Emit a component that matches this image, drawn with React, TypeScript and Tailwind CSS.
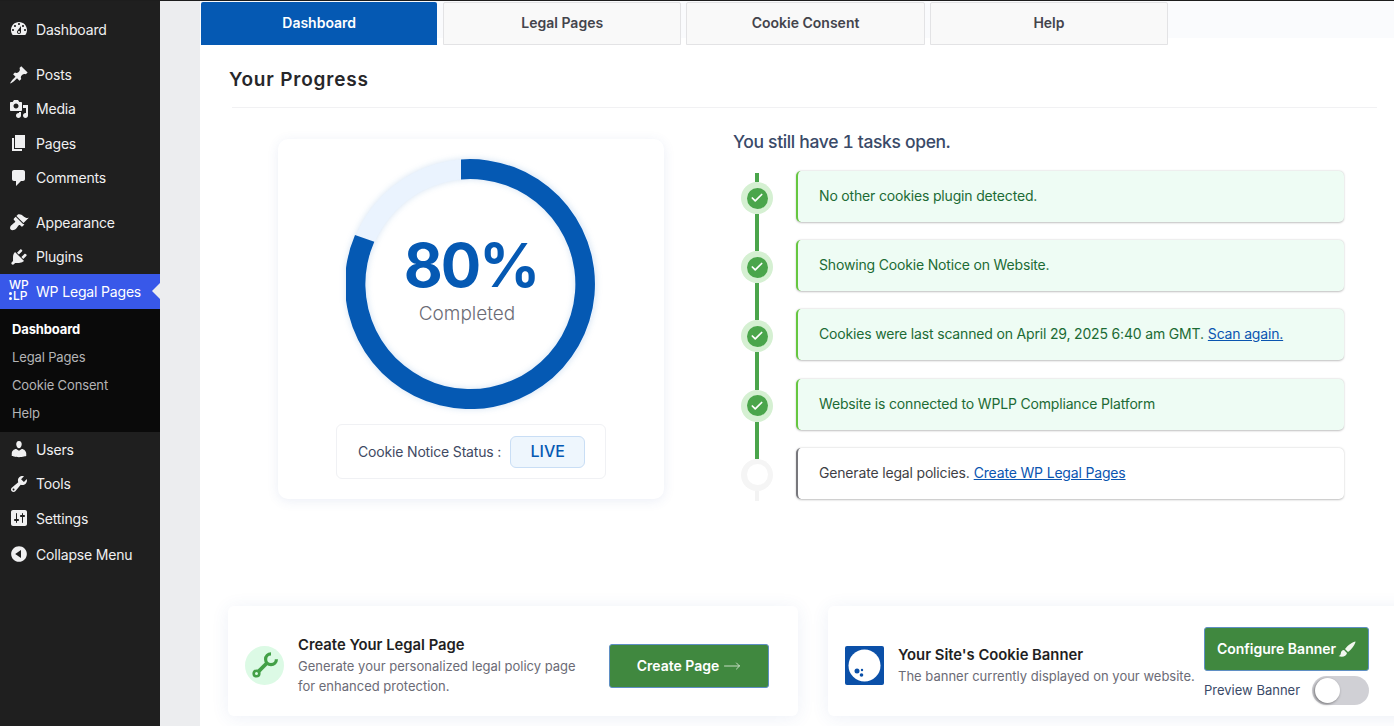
import { Check, MoveRight } from 'lucide-react'

const icons = {
  dashboard: 'M3.76 16h12.48c1.1-1.37 1.76-3.11 1.76-5 0-4.42-3.58-8-8-8s-8 3.58-8 8c0 1.89.66 3.63 1.76 5zM10 4c.55 0 1 .45 1 1s-.45 1-1 1-1-.45-1-1 .45-1 1-1zM6 6c.55 0 1 .45 1 1s-.45 1-1 1-1-.45-1-1 .45-1 1-1zm8 0c.55 0 1 .45 1 1s-.45 1-1 1-1-.45-1-1 .45-1 1-1zm-5.37 5.55L12 7v6c0 1.1-.9 2-2 2s-2-.9-2-2c0-.57.24-1.08.63-1.45zM4 10c.55 0 1 .45 1 1s-.45 1-1 1-1-.45-1-1 .45-1 1-1zm12 0c.55 0 1 .45 1 1s-.45 1-1 1-1-.45-1-1 .45-1 1-1zm-5 3c0-.55-.45-1-1-1s-1 .45-1 1 .45 1 1 1 1-.45 1-1z',
  posts: 'M10.44 3.02l1.82-1.82 6.36 6.35-1.83 1.82c-1.05-.68-2.48-.57-3.41.36l-.75.75c-.92.93-1.04 2.35-.35 3.41l-1.83 1.82-2.41-2.41-2.8 2.79c-.42.42-3.38 2.71-3.8 2.29s1.86-3.39 2.28-3.81l2.79-2.79L4.1 9.36l1.83-1.82c1.05.69 2.48.57 3.4-.36l.75-.75c.93-.92 1.05-2.35.36-3.41z',
  media: 'M13 11V4c0-.55-.45-1-1-1h-1.67L9 1H5L3.67 3H2c-.55 0-1 .45-1 1v7c0 .55.45 1 1 1h10c.55 0 1-.45 1-1zM7 4.5c1.38 0 2.5 1.12 2.5 2.5S8.38 9.5 7 9.5 4.5 8.38 4.5 7 5.62 4.5 7 4.5zM14 6h5v10.5c0 1.38-1.12 2.5-2.5 2.5S14 17.88 14 16.5s1.12-2.5 2.5-2.5c.17 0 .34.02.5.05V9h-3V6zm-4 8.05V13h2v3.5c0 1.38-1.12 2.5-2.5 2.5S7 17.88 7 16.5 8.12 14 9.5 14c.17 0 .34.02.5.05z',
  pages: 'M6 15V2h10v13H6zm-1 1h8v2H3V5h2v11z',
  comments: 'M5 2h9c1.1 0 2 .9 2 2v7c0 1.1-.9 2-2 2h-2l-5 5v-5H5c-1.1 0-2-.9-2-2V4c0-1.1.9-2 2-2z',
  appearance: 'M14.48 11.06L7.41 3.99l1.5-1.5c.5-.56 2.3-.47 3.51.32 1.21.8 1.43 1.28 2.91 2.1 1.18.64 2.45 1.26 4.45.85zm-.71.71L6.7 4.7 4.93 6.47c-.39.39-.39 1.02 0 1.41l1.06 1.06c.39.39.39 1.03 0 1.42-.6.6-1.43 1.11-2.21 1.69-.35.26-.7.53-1.01.84C1.43 13.23.4 16.2 1.71 17.51s4.18.36 5.52-.98c.31-.31.59-.65.84-1.01.58-.78 1.09-1.6 1.69-2.2.39-.39 1.02-.39 1.41 0l1.06 1.05c.39.39 1.02.39 1.41 0l1.77-1.77z',
  plugins: 'M13.11 4.36L9.87 7.6 8 5.73l3.24-3.24c.35-.34 1.05-.2 1.56.32.52.51.66 1.21.31 1.55zm-8 1.77l.91-1.12 9.01 9.01-1.19.84c-.71.71-2.63 1.16-3.82 1.16H6.14L4.9 17.26c-.59.59-1.54.59-2.12 0-.59-.58-.59-1.53 0-2.12l1.24-1.24v-3.88c0-1.13.4-3.19 1.09-3.89zm7.26 3.97l3.24-3.24c.34-.35 1.04-.21 1.55.31.52.51.66 1.21.31 1.55l-3.24 3.25z',
  users: 'M10 9.25c-2.27 0-2.73-3.44-2.73-3.44C7 4.02 7.82 2 9.97 2c2.16 0 2.98 2.02 2.71 3.81 0 0-.41 3.44-2.68 3.44zm0 2.57L12.72 10c2.39 0 4.52 2.33 4.52 4.53v2.49s-3.65 1.13-7.24 1.13c-3.65 0-7.24-1.13-7.24-1.13v-2.49c0-2.25 1.94-4.48 4.47-4.48z',
  tools: 'M16.68 9.77c-1.34 1.34-3.3 1.67-4.95.99l-5.41 6.52c-.99.99-2.59.99-3.58 0s-.99-2.59 0-3.57l6.52-5.42c-.68-1.65-.35-3.61.99-4.95 1.28-1.28 3.12-1.62 4.72-1.06l-2.89 2.89 2.82 2.82 2.86-2.87c.53 1.58.18 3.39-1.08 4.65zM3.81 16.21c.4.39 1.04.39 1.43 0 .4-.4.4-1.04 0-1.43-.39-.4-1.03-.4-1.43 0-.39.39-.39 1.03 0 1.43z',
  settings: 'M18 16V4c0-1.1-.9-2-2-2H4c-1.1 0-2 .9-2 2v12c0 1.1.9 2 2 2h12c1.1 0 2-.9 2-2zM8 11h1c.55 0 1 .45 1 1s-.45 1-1 1H8v1.5c0 .28-.22.5-.5.5s-.5-.22-.5-.5V13H6c-.55 0-1-.45-1-1s.45-1 1-1h1V5.5c0-.28.22-.5.5-.5s.5.22.5.5V11zm5-2h-1c-.55 0-1-.45-1-1s.45-1 1-1h1V5.5c0-.28.22-.5.5-.5s.5.22.5.5V7h1c.55 0 1 .45 1 1s-.45 1-1 1h-1v5.5c0 .28-.22.5-.5.5s-.5-.22-.5-.5V9z',
  collapse: 'M10 2.16c4.33 0 7.84 3.51 7.84 7.84s-3.51 7.84-7.84 7.84S2.16 14.33 2.16 10 5.71 2.16 10 2.16zm2 11.72V6.12L6.18 9.97z',
}

function Dashicon({ d, className }: { d: string; className?: string }) {
  return (
    <svg viewBox="0 0 20 20" fill="currentColor" fillRule="evenodd" className={className}>
      <path d={d} />
    </svg>
  )
}

function MenuItem({ icon, label }: { icon: string; label: string }) {
  return (
    <div className="flex h-[34.4px] items-center text-[14px] tracking-[-0.17px] text-[#f0f0f1]">
      <Dashicon d={icon} className="ml-[9px] h-5 w-5 shrink-0 text-[#f0f0f1]" />
      <span className="ml-[7px]">{label}</span>
    </div>
  )
}

function Sidebar() {
  return (
    <aside className="flex w-[160px] shrink-0 flex-col bg-[#1f1f1f] pt-[11px]">
      <MenuItem icon={icons.dashboard} label="Dashboard" />
      <div className="mt-[11px]">
        <MenuItem icon={icons.posts} label="Posts" />
        <MenuItem icon={icons.media} label="Media" />
        <MenuItem icon={icons.pages} label="Pages" />
        <MenuItem icon={icons.comments} label="Comments" />
      </div>
      <div className="mt-[10.2px]">
        <MenuItem icon={icons.appearance} label="Appearance" />
        <MenuItem icon={icons.plugins} label="Plugins" />
      </div>
      {/* Active plugin row */}
      <div className="relative flex h-[35px] items-center bg-[#3858e9] text-[14px] tracking-[-0.17px] text-white">
        <div className="mb-[2px] ml-[9px] flex w-5 flex-col text-[12px] leading-[11px] font-medium tracking-normal">
          <span>WP</span>
          <span className="flex items-center">
            <span className="mr-px flex flex-col gap-[2px]">
              <span className="h-[3px] w-[3px] rounded-full bg-white" />
              <span className="h-[3px] w-[3px] rounded-full bg-white" />
            </span>
            LP
          </span>
        </div>
        <span className="ml-[7px]">WP Legal Pages</span>
        <div className="absolute top-[9px] right-0 h-0 w-0 border-y-[8px] border-r-[8px] border-y-transparent border-r-[#ecedef]" />
      </div>
      <div className="flex h-[123.2px] flex-col bg-[#0a0a0a] pt-[7px] pl-[12px] text-[13px] tracking-[-0.14px]">
        <div className="flex h-[28px] items-center font-bold text-white">Dashboard</div>
        <div className="flex h-[28px] items-center text-[#b4b4b6]">Legal Pages</div>
        <div className="flex h-[28px] items-center text-[#b4b4b6]">Cookie Consent</div>
        <div className="flex h-[28px] items-center text-[#b4b4b6]">Help</div>
      </div>
      <MenuItem icon={icons.users} label="Users" />
      <MenuItem icon={icons.tools} label="Tools" />
      <MenuItem icon={icons.settings} label="Settings" />
      <div className="mt-[2px]">
        <MenuItem icon={icons.collapse} label="Collapse Menu" />
      </div>
    </aside>
  )
}

function Tabs() {
  const tabs = ['Dashboard', 'Legal Pages', 'Cookie Consent', 'Help']
  return (
    <div className="flex gap-[5px] bg-[linear-gradient(#fafbfd_37px,#ffffff_37px)] pt-px pl-px">
      {tabs.map((t, i) => (
        <div
          key={t}
          className={
            i === 0
              ? 'mr-[0.6px] flex h-[43px] w-[236.4px] items-center justify-center rounded-t-[2px] bg-[#0559b3] pb-[2px] text-[14px] font-semibold text-white'
              : 'flex h-[43px] w-[238.4px] items-center justify-center rounded-t-[2px] border border-[#e3e3e5] bg-[#f9f9f9] pb-[2px] text-[14px] font-semibold text-[#44444c]'
          }
        >
          {t}
        </div>
      ))}
    </div>
  )
}

function ProgressRing() {
  return (
    <div className="relative h-[250px] w-[250px]">
      <svg viewBox="0 0 250 250" className="h-[250px] w-[250px] drop-shadow-[0_0_3px_rgba(11,92,182,0.18)]">
        <circle cx="125" cy="125" r="115" fill="none" stroke="#eaf3fe" strokeWidth="20" />
        <path d="M115 .4 A125 125 0 1 1 9 76 L28.3 82.7 A105 105 0 1 0 115 20.5 Z" fill="#0559b3" />
      </svg>
      <div className="absolute inset-0 flex flex-col items-center pt-[76px]">
        <div className="text-[60px] leading-[60px] font-bold tracking-[-2px] text-[#0559b3]">80%</div>
        <div className="mt-[5px] -ml-2 text-[19px] leading-[28px] font-light text-[#6c6c76]">Completed</div>
      </div>
    </div>
  )
}

type Task = { text: string; link?: string; done: boolean }

const tasks: Task[] = [
  { text: 'No other cookies plugin detected.', done: true },
  { text: 'Showing Cookie Notice on Website.', done: true },
  { text: 'Cookies were last scanned on April 29, 2025 6:40 am GMT.', link: 'Scan again.', done: true },
  { text: 'Website is connected to WPLP Compliance Platform', done: true },
  { text: 'Generate legal policies.', link: 'Create WP Legal Pages', done: false },
]

function TaskRow({ task, index }: { task: Task; index: number }) {
  return (
    <div className="flex h-[69.2px]">
      <div className="flex w-8 shrink-0 flex-col items-center">
        {index === 0 ? (
          <div className="mt-[3px] h-[9px] w-1 bg-[#4aa54b]" />
        ) : (
          <div className="h-[12px] w-1 bg-[#4aa54b]" />
        )}
        {task.done ? (
          <div className="flex h-8 w-8 shrink-0 items-center justify-center rounded-full bg-[#d5f0d2]">
            <div className="flex h-[21px] w-[21px] items-center justify-center rounded-full bg-[#4aa54b]">
              <Check size={14} strokeWidth={3} className="text-white" />
            </div>
          </div>
        ) : (
          <div className="flex h-8 w-8 shrink-0 items-center justify-center rounded-full bg-[#f5f5f5]">
            <div className="h-[21px] w-[21px] rounded-full bg-white" />
          </div>
        )}
        {task.done ? (
          <div className="w-1 flex-1 bg-[#4aa54b]" />
        ) : (
          <div className="h-[10px] w-1 bg-[#f3f3f3]" />
        )}
      </div>
      <div
        className={
          task.done
            ? 'mt-px ml-[23px] flex h-[51px] w-[548px] items-center rounded-[5px] border-l-2 border-[#66c73f] bg-[#eefcf4] pb-[2px] pl-[21px] text-[14px] tracking-[-0.17px] text-[#1c6b35] shadow-[0_0.5px_2px_rgba(0,0,0,0.25)]'
            : 'mt-px ml-[23px] flex h-[51px] w-[548px] items-center rounded-[5px] border-l-2 border-[#77777c] bg-white pb-[2px] pl-[21px] text-[14px] tracking-[-0.17px] text-[#3f3f46] shadow-[0_0.5px_2px_rgba(0,0,0,0.25)]'
        }
      >
        <span>{task.text}</span>
        {task.link && <a className="ml-1 text-[#0a55b0] underline">{task.link}</a>}
      </div>
    </div>
  )
}

function Progress() {
  return (
    <div className="flex items-start">
      <div className="mt-[11px] ml-[78px] flex h-[360px] w-[386px] shrink-0 flex-col items-center rounded-[10px] bg-white pt-[20px] shadow-[0_2px_12px_rgba(60,90,170,0.1)]">
        <ProgressRing />
        <div className="mt-[15px] flex h-[55px] w-[270px] items-center rounded-md border border-[#f0f1f4] pl-[21px] text-[14px] tracking-[-0.17px] text-[#3f4a63]">
          <span>Cookie Notice Status :</span>
          <span className="ml-[9px] flex h-[32px] w-[75px] items-center justify-center rounded-md border border-[#c9def5] bg-[#eef6fd] pb-px text-[16px] font-medium tracking-normal text-[#0559b3]">
            LIVE
          </span>
        </div>
      </div>
      <div className="ml-[69px] flex flex-col">
        <div className="mt-px h-[27px] text-[17.5px] leading-[26px] font-medium tracking-[-0.35px] text-[#3a4a68] tabular-nums">
          You still have 1 tasks open.
        </div>
        <div className="mt-[14px] ml-2 flex flex-col">
          {tasks.map((t, i) => (
            <TaskRow key={t.text} task={t} index={i} />
          ))}
        </div>
      </div>
    </div>
  )
}

function BottomCards() {
  return (
    <div className="mt-[90px] ml-[28px] flex gap-[30px]">
      <div className="flex h-[110px] w-[570px] shrink-0 items-center rounded-md bg-white pt-[10px] pl-[17px] shadow-[0_2px_18px_rgba(60,90,170,0.09)]">
        <div className="flex h-[39px] w-[39px] shrink-0 items-center justify-center rounded-full bg-[#dcfae5]">
          <svg viewBox="0 0 39 39" fill="none" stroke="#43a047" className="h-[39px] w-[39px]">
            <circle cx="11.5" cy="27.5" r="2.8" strokeWidth="2.6" />
            <path d="M13.6 25.4 L22.5 16.5" strokeWidth="3.8" />
            <path d="M26 7.8 A5.4 5.4 0 1 0 31.4 13.2" strokeWidth="3.2" />
          </svg>
        </div>
        <div className="ml-[14px] w-[296px]">
          <div className="text-[14.8px] leading-[21px] font-semibold text-[#1f1f23]">Create Your Legal Page</div>
          <div className="text-[13px] leading-[20px] text-[#6b6b76]">
            Generate your personalized legal policy page for enhanced protection.
          </div>
        </div>
        <div className="ml-[15px] flex h-[44px] w-[160px] items-center justify-center gap-1 rounded-[3px] border border-[#5f8fc4] bg-[#40883f] text-[14px] font-semibold text-white">
          Create Page
          <MoveRight size={18} strokeWidth={1.25} className="text-[#cfe2cc]" />
        </div>
      </div>
      <div className="flex h-[110px] w-[590px] shrink-0 items-center rounded-md bg-white pt-[10px] pl-[17px] shadow-[0_2px_18px_rgba(60,90,170,0.09)]">
        <svg viewBox="0 0 39 39" className="h-[39px] w-[39px] shrink-0">
          <rect width="39" height="39" rx="2" fill="#0b50a8" />
          <circle cx="19.5" cy="19.5" r="16" fill="#fff" />
          <circle cx="12" cy="25" r="2.5" fill="#0b50a8" />
          <circle cx="16.5" cy="29" r="1.8" fill="#0b50a8" />
          <circle cx="17" cy="24" r="1.2" fill="#0b50a8" />
        </svg>
        <div className="ml-[14px] w-[306px]">
          <div className="text-[14.8px] leading-[21px] font-semibold text-[#1f1f23]">Your Site's Cookie Banner</div>
          <div className="text-[13px] leading-[20px] text-[#6b6b76]">
            The banner currently displayed on your website.
          </div>
        </div>
        <div className="flex w-[165px] shrink-0 flex-col">
          <div className="flex h-[44px] items-center justify-center gap-[2px] rounded-[3px] border border-[#5f8fc4] bg-[#40883f] text-[14px] font-semibold text-white">
            Configure Banner
            <svg viewBox="0 0 18 16" fill="#f2f7f0" className="h-[16px] w-[18px]">
              <path d="M17.5 .5C15 .5 9.5 4.5 7 8L10 11C13.5 8.5 17.5 3 17.5 .5Z" />
              <path d="M6 9C4 9 3 10.5 2.8 12.2C2.6 14 1.6 14.6 .5 15C4 16.5 8.5 15.5 9 12Z" />
            </svg>
          </div>
          <div className="mt-[5px] flex items-center justify-between text-[13px] text-[#3a4a68]">
            <span>Preview Banner</span>
            <div className="flex h-[29px] w-[57px] items-center rounded-full bg-[#d0d0d5] pl-[3px]">
              <div className="h-[25px] w-[25px] rounded-full bg-white shadow-[-1px_1px_3px_rgba(0,0,0,0.45)]" />
            </div>
          </div>
        </div>
      </div>
    </div>
  )
}

export default function App() {
  return (
    <div className="flex h-[726px] w-[1394px] overflow-hidden border-t border-[#1d1d1d] bg-white font-['Inter',sans-serif]">
      <Sidebar />
      <div className="w-[40px] shrink-0 bg-[#ecedef]" />
      <main className="min-w-0 flex-1">
        <Tabs />
        <h1 className="mt-[21px] ml-[29px] h-7 text-[19px] leading-7 font-semibold tracking-[0.8px] text-[#27272a]">
          Your Progress
        </h1>
        <div className="mt-[13px] ml-[32px] h-px w-[1145px] bg-[#f1f1f3]" />
        <div className="mt-[20px]">
          <Progress />
        </div>
        <BottomCards />
      </main>
    </div>
  )
}
